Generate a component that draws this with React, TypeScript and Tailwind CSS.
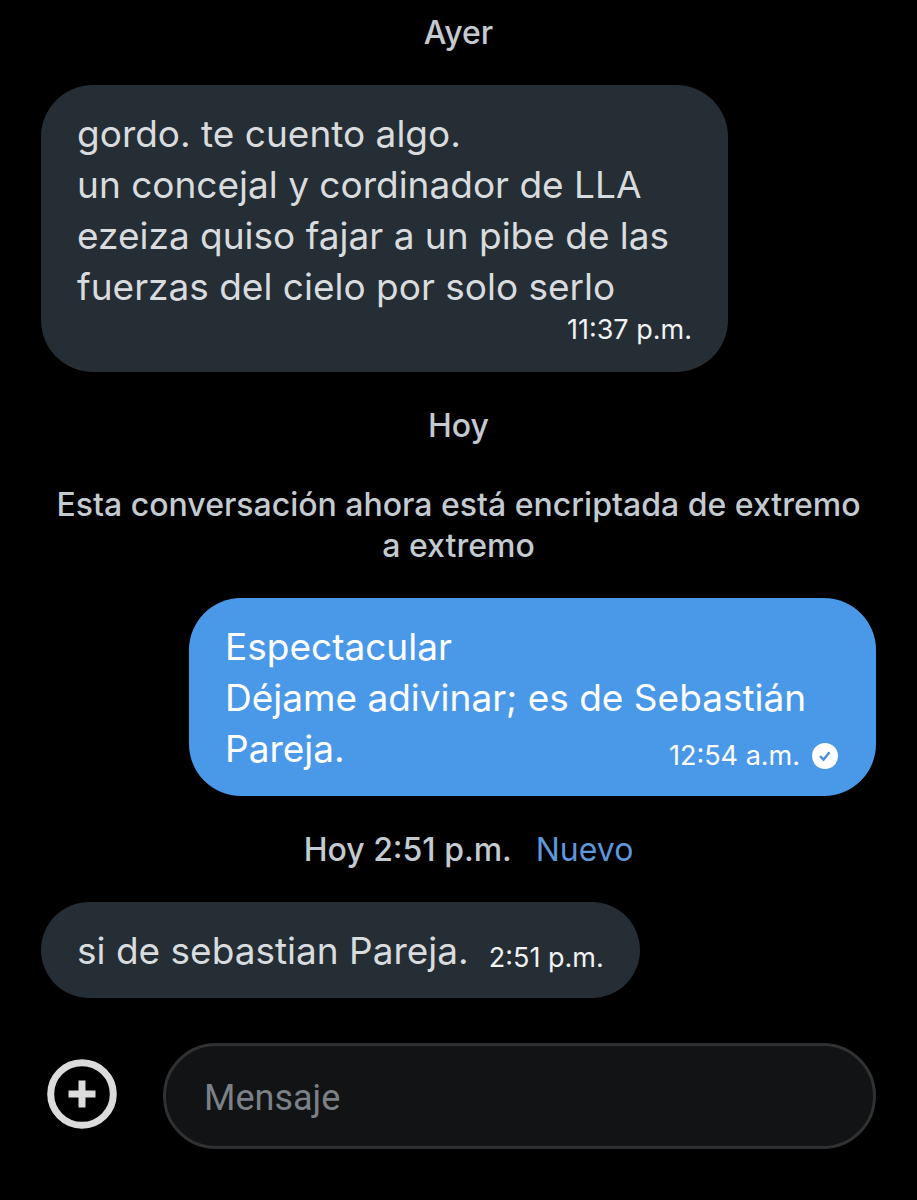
import type { ReactNode } from "react";

function DayLabel({ children }: { children: ReactNode }) {
  return (
    <p className="text-center text-[32px] leading-[41px] font-medium text-[#c3cad0]">
      {children}
    </p>
  );
}

function Time({ children }: { children: ReactNode }) {
  return <time className="text-[27px] leading-9 whitespace-nowrap">{children}</time>;
}

function SentBadge() {
  return (
    <svg viewBox="0 0 26 26" className="size-[26px]" role="img" aria-label="Enviado">
      <circle cx="13" cy="13" r="13" fill="#fff" />
      <path d="M8 13.2l3.5 3.4 6-7.4" fill="none" stroke="#4a8fd8" strokeWidth="2.4" />
    </svg>
  );
}

export default function App() {
  return (
    <main className="min-h-screen bg-black px-[41px] pt-3 pb-[51px] font-[Inter,sans-serif]">
      <DayLabel>Ayer</DayLabel>

      <div className="mt-8 flex w-full max-w-[687px] flex-col rounded-[52px] bg-[#262e35] px-9 pt-[23px] pb-6 text-[#d9dcde]">
        <p className="text-[37px] leading-[51px]">
          gordo. te cuento algo.
          <br />
          un concejal y cordinador de LLA
          <br />
          ezeiza quiso fajar a un pibe de las
          <br />
          fuerzas del cielo por solo serlo
        </p>
        <div className="flex justify-end text-[#f0f2f3]">
          <Time>11:37 p.m.</Time>
        </div>
      </div>

      <div className="mt-[33px]">
        <DayLabel>Hoy</DayLabel>
      </div>

      <div className="mt-[38px]">
        <DayLabel>
          Esta conversación ahora está encriptada de extremo
          <br />
          a extremo
        </DayLabel>
      </div>

      <div className="mt-8 ml-auto w-full max-w-[687px] rounded-[52px] bg-[#4a99e9] px-9 pt-[23px] pb-[22px] text-[37px] leading-[51px] text-white">
        <p>
          Espectacular
          <br />
          Déjame adivinar; es de Sebastián
        </p>
        <div className="flex items-end justify-between pr-0.5">
          <p>Pareja.</p>
          <div className="flex items-center gap-3">
            <Time>12:54 a.m.</Time>
            <SentBadge />
          </div>
        </div>
      </div>

      <div className="mt-[33px] flex items-center justify-center gap-6 pl-5">
        <DayLabel>Hoy 2:51 p.m.</DayLabel>
        <span className="text-[32px] leading-[41px] text-[#5e97db]">Nuevo</span>
      </div>

      <div className="mt-8 flex w-fit items-end gap-5 rounded-full bg-[#262e35] px-9 pt-[23px] pb-[22px] text-[#d9dcde]">
        <p className="text-[37px] leading-[51px]">si de sebastian Pareja.</p>
        <span className="flex text-[#f0f2f3]">
          <Time>2:51 p.m.</Time>
        </span>
      </div>

      <form className="mt-[45px] flex items-center gap-[46px] pl-[6px]">
        <button type="button" aria-label="Adjuntar" className="mb-1 shrink-0">
          <svg viewBox="0 0 70 70" className="size-[70px]" fill="none" stroke="#dcdcdc">
            <circle cx="35" cy="35" r="31.3" strokeWidth="7" />
            <path d="M35 21.5v27M21.5 35h27" strokeWidth="7" />
          </svg>
        </button>
        <input
          type="text"
          aria-label="Mensaje"
          placeholder="Mensaje"
          className="h-[106px] min-w-0 flex-1 rounded-full border-3 border-[#303132] bg-[#121315] px-[38px] pt-1 font-[Roboto,sans-serif] text-[36px] text-white placeholder:text-[#7b8187]"
        />
      </form>
    </main>
  );
}
